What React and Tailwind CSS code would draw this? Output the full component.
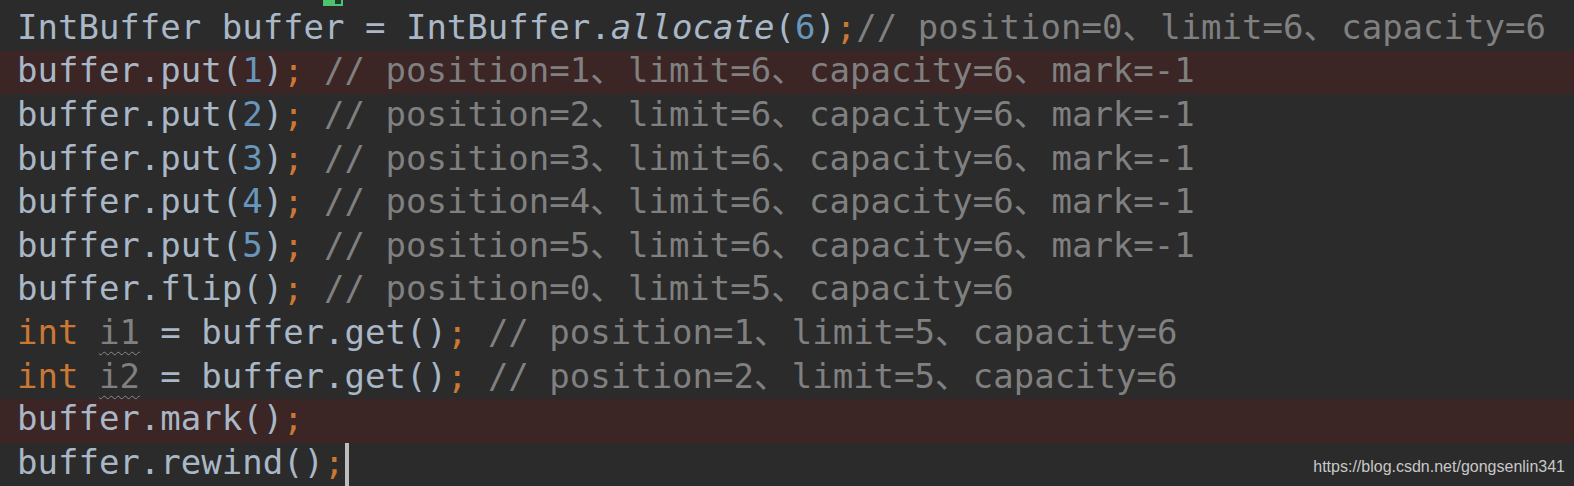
import React from 'react';

const K = ({ children }) => <span className="text-[#cc7832]">{children}</span>;
const N = ({ children }) => <span className="text-[#6897bb]">{children}</span>;
const C = ({ children }) => <span className="text-[#808080]">{children}</span>;
const Sep = () => (
    <span className="inline-block w-[2ch] text-[#808080] font-['Noto_Sans_CJK_SC',sans-serif]">、</span>
);
const Unused = ({ children }) => (
    <span className="text-[#808080] underline decoration-wavy decoration-[#8a8a8a] decoration-1 underline-offset-[7px]">{children}</span>
);

const Row = ({ hl, children }) => (
    <div className={`h-[43.6px] flex items-center pb-[6px] pl-[17px] whitespace-pre ${hl ? 'bg-[#3b2525]' : ''}`}>
        <div>{children}</div>
    </div>
);

const putComment = (n) => (
    <C>
        // position={n}<Sep />limit=6<Sep />capacity=6<Sep />mark=-1
    </C>
);

const App = () => {
    return (
        <div className="relative w-[1574px] h-[486px] overflow-hidden bg-[#2b2b2b] text-[#a9b7c6] text-[34px] leading-none font-['DejaVu_Sans_Mono',monospace] pt-[7px]">
            <div className="absolute top-0 left-[323px] w-[20px] h-[6px] bg-[#4cc46d]">
                <div className="absolute right-[2px] top-0 w-[6px] h-[4px] bg-[#1f3a28]"></div>
            </div>

            <Row>
                IntBuffer buffer = IntBuffer.<span className="italic">allocate</span>(<N>6</N>)<K>;</K>
                <C>// position=0<Sep />limit=6<Sep />capacity=6</C>
            </Row>
            {[1, 2, 3, 4, 5].map((n) => (
                <Row key={n} hl={n === 1}>
                    buffer.put(<N>{n}</N>)<K>;</K> {putComment(n)}
                </Row>
            ))}
            <Row>
                buffer.flip()<K>;</K> <C>// position=0<Sep />limit=5<Sep />capacity=6</C>
            </Row>
            <Row>
                <K>int</K> <Unused>i1</Unused> = buffer.get()<K>;</K> <C>// position=1<Sep />limit=5<Sep />capacity=6</C>
            </Row>
            <Row>
                <K>int</K> <Unused>i2</Unused> = buffer.get()<K>;</K> <C>// position=2<Sep />limit=5<Sep />capacity=6</C>
            </Row>
            <Row hl>
                buffer.mark()<K>;</K>
            </Row>
            <div className="h-[43.6px] flex items-center pb-[6px] pl-[17px] whitespace-pre">
                <div>buffer.rewind()<K>;</K></div>
                <div className="self-start w-[4px] h-[44px] bg-[#bdbdbd]"></div>
            </div>

            <div className="absolute right-[9px] bottom-[11px] text-[16px] leading-none text-[#c8c8c8] font-['Liberation_Sans',Arial,sans-serif]">
                https://blog.csdn.net/gongsenlin341
            </div>
        </div>
    );
};

export default App;
